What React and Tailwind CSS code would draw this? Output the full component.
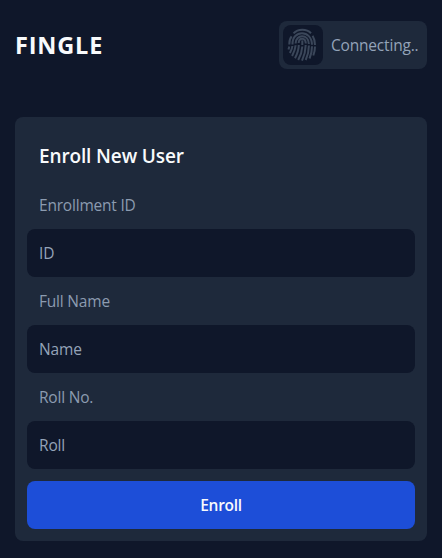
function Fingerprint() {
  return (
    <svg viewBox="0 0 30 34" className="mr-[2px] h-[34px] w-[30px]" fill="none" stroke="#3b475a" strokeWidth="2" strokeLinecap="butt">
      {/* upper ridges */}
      <path d="M6.500 5.400C11 .6 19.500 .5 24 5.200" />
      <path d="M2.300 16.500C2.200 13 3 10.300 4.600 8.300M25.600 7.800C27.500 11 28 13.500 28 17" />
      <path d="M5.500 16.500C5 1.500 24.800 1.300 25 16.800" />
      <path d="M8.600 15.500C8.800 5.600 21.600 5.600 21.900 16" />
      <path d="M11.700 15C12 9.200 18.600 9.300 18.800 15.500" />
      <path d="M15.300 12.400V17" />
      {/* lower ridges */}
      <path d="M2.300 18.500L1.500 21.500" />
      <path d="M5.400 18C5.200 20.500 3.900 23 2.900 25" />
      <path d="M8.600 17.200C8.300 21.500 6.800 24.700 5.100 28" />
      <path d="M11.800 17C11.700 22 10.200 26 8 30.300" />
      <path d="M15.300 18.500C15 23.500 13.700 27.500 11.200 32" />
      <path d="M18.700 17C18.600 23 17.300 27.700 15 32.600" />
      <path d="M21.900 17.500C21.900 23 21 27 18.700 32" />
      <path d="M25 18.300C25 22.500 24.300 26.500 22.500 30.500" />
      <path d="M28 18.500C28 21.500 27.500 24.500 26.300 27.500" />
    </svg>
  );
}

function Field({ label, placeholder }) {
  return (
    <label className="block">
      <span className="flex h-12 items-center px-3 pt-[2px] tracking-[-0.013em] text-[#8c9bb0]">{label}</span>
      <input
        placeholder={placeholder}
        className="block h-12 w-full rounded-lg bg-[#0f172a] px-3 tracking-[-0.01em] text-slate-200 outline-none placeholder:text-[#94a3b8]"
      />
    </label>
  );
}

export default function App() {
  return (
    <main className="min-h-screen bg-[#0f172a] px-[15px] pt-[21px] font-['Open_Sans','Noto_Sans',sans-serif] text-[15.5px] text-slate-50">
      <header className="flex h-12 items-center justify-between">
        <h1 className="pt-[2px] text-[23.5px] font-bold tracking-[0.035em]">FINGLE</h1>
        <div className="flex h-12 w-[148px] items-center gap-2 rounded-lg bg-[#1e293b] p-1 text-[#94a3b8]">
          <div className="flex size-10 shrink-0 items-center justify-center rounded-lg bg-[#0f172a]">
            <Fingerprint />
          </div>
          <span className="whitespace-nowrap pt-[2px] tracking-[-0.012em]">Connecting..</span>
        </div>
      </header>
      <section className="mt-12 rounded-lg bg-[#1e293b] p-3">
        <h2 className="flex h-[52px] items-center px-3 pt-[2px] text-[19px] font-semibold tracking-[-0.007em]">Enroll New User</h2>
        <form className="flex flex-col">
          <Field label="Enrollment ID" placeholder="ID" />
          <Field label="Full Name" placeholder="Name" />
          <Field label="Roll No." placeholder="Roll" />
          <button type="button" className="mt-3 h-12 rounded-lg bg-[#1d4ed8] pt-[2px] font-semibold tracking-[-0.02em]">
            Enroll
          </button>
        </form>
      </section>
    </main>
  );
}
